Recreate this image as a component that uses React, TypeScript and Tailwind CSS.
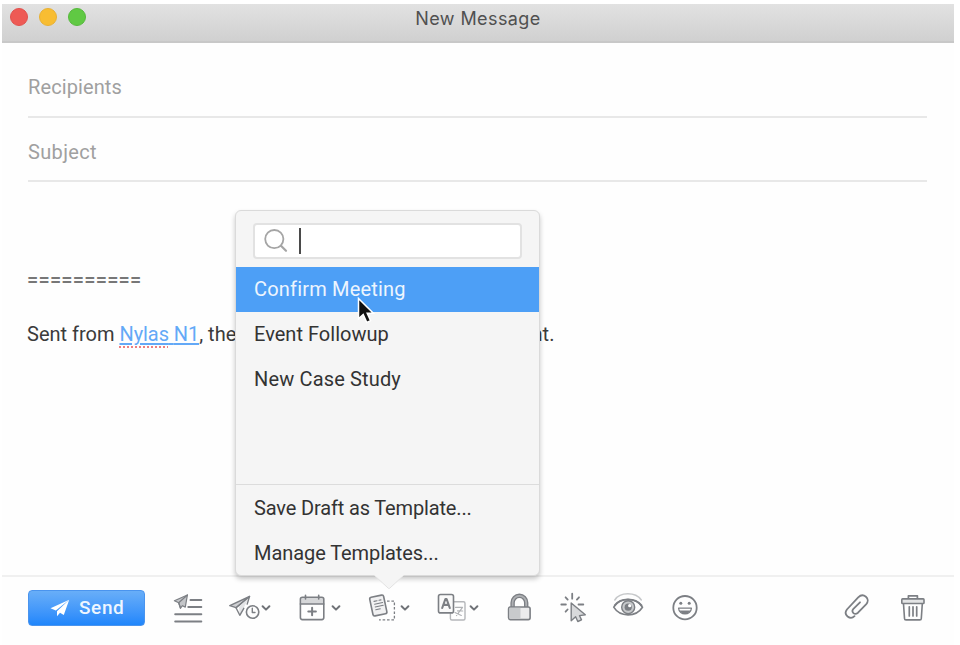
import type { ReactNode } from "react";

const templates = [
  { name: "Confirm Meeting", className: "bg-[#4d9ff6] text-[#edf5fe] tracking-[0.18px]" },
  { name: "Event Followup", className: "tracking-[0.02px]" },
  { name: "New Case Study", className: "tracking-[0.15px]" },
];

const Icon = ({
  children,
  className = "",
}: {
  children: ReactNode;
  className?: string;
}) => (
  <svg
    viewBox="0 0 32 32"
    fill="none"
    stroke="#7c7f84"
    strokeWidth="1.6"
    strokeLinecap="round"
    strokeLinejoin="round"
    className={`size-8 shrink-0 ${className}`}
  >
    {children}
  </svg>
);

const Chevron = ({ className = "" }: { className?: string }) => (
  <svg
    viewBox="0 0 10 8"
    fill="none"
    stroke="#6f7277"
    strokeWidth="2"
    strokeLinecap="round"
    strokeLinejoin="round"
    className={`mt-3 h-2 w-2.5 shrink-0 ${className}`}
  >
    <path d="M1.6 2.3 5 5.6 8.4 2.3" />
  </svg>
);

const TitleBar = () => (
  <header className="relative flex h-[39px] items-start border-b-2 border-[#c8c8c8] bg-linear-to-b from-[#e2e2e2] to-[#d0d0d0] pt-1 pl-2">
    <div className="flex gap-[11px]">
      <span className="size-[18px] rounded-full border border-[#e2504c] bg-[#ee5a55]" />
      <span className="size-[18px] rounded-full border border-[#e9b132] bg-[#f8bd32]" />
      <span className="size-[18px] rounded-full border border-[#55b93b] bg-[#60c943]" />
    </div>
    <h1 className="absolute inset-x-0 top-[3px] text-center font-['Inter'] text-[18px] leading-6 tracking-[0.4px] text-[#505050]">
      New Message
    </h1>
  </header>
);

const Field = ({ label, className }: { label: string; className: string }) => (
  <div
    className={`mr-[27px] ml-[26px] flex border-b-2 border-[#e8e8e8] text-[20px] leading-6 text-[#a0a0a0] ${className}`}
  >
    {label}
  </div>
);

const TemplatePicker = () => (
  <div className="absolute top-[206px] left-[233px] flex h-[366px] w-[305px] flex-col rounded-[6px] border border-[#dadada] bg-[#f5f5f5] text-[20px] text-[#333] shadow-[0_3px_5px_rgba(0,0,0,0.22)]">
    <div className="h-14 pt-3 pr-[17px] pl-[17px]">
      <div className="flex h-9 items-center rounded-[4px] border-2 border-[#e2e2e2] bg-white pl-[9px]">
        <svg
          viewBox="0 0 24 24"
          fill="none"
          stroke="#a5a5a5"
          strokeWidth="1.8"
          strokeLinecap="round"
          className="size-6"
        >
          <circle cx="10.3" cy="10.1" r="9.1" />
          <path d="m17 16.8 5 5" strokeWidth="2.2" />
        </svg>
        <span className="ml-[11px] h-[26px] w-[2px] bg-[#4a4a4a]" />
      </div>
    </div>
    <ul>
      {templates.map(({ name, className }) => (
        <li
          key={name}
          className={`flex h-[44.7px] items-center px-[18px] ${className}`}
        >
          {name}
        </li>
      ))}
    </ul>
    <ul className="mt-auto border-t-[1.5px] border-[#dcdcdc]">
      <li className="flex h-[45px] items-center px-[18px] tracking-[-0.15px]">
        Save Draft as Template...
      </li>
      <li className="flex h-[45px] items-center px-[18px] tracking-[-0.07px]">
        Manage Templates...
      </li>
    </ul>
    <svg
      viewBox="0 0 30 15"
      className="absolute top-[363px] left-[138px] h-[15px] w-[30px]"
    >
      <path d="M0 0h30v1L15.5 14.4h-1L0 1z" fill="#f5f5f5" />
      <path d="M1 2 14.5 14.4h1L29 2" fill="none" stroke="#e2e2e2" />
    </svg>
  </div>
);

const Cursor = () => (
  <svg
    viewBox="0 0 18 28"
    className="absolute top-[293px] left-[355px] h-7 w-[18px]"
  >
    <path
      d="M1.5 1.5v20.3l4.7-4.3 3.5 7.9 3.9-1.7-3.4-7.5h6.1z"
      fill="#111"
      stroke="#fff"
      strokeWidth="1.5"
    />
  </svg>
);

const Toolbar = () => (
  <footer className="flex h-[70px] items-start border-t-2 border-[#f0f0f0] pt-[13px] pl-[26px]">
    <button className="flex h-9 w-[117px] items-center rounded-[4px] border border-[#4a94ee] bg-linear-to-b from-[#68aef8] to-[#1f86fb] pl-[21px] text-[19px] font-medium tracking-[0.6px] text-[#eef6ff]">
      <svg viewBox="0 0 20 18" fill="#fff" className="h-[18px] w-5">
        <path d="M19.2.8.5 9.2l5.3 2.2z" />
        <path d="M19.2.8 7 12.2v5l3-3.5 3.8 2.2z" />
      </svg>
      <span className="ml-[9px]">Send</span>
    </button>

    <div className="flex pt-0.5">
      {/* send and archive */}
      <Icon className="ml-[27px]">
        <path d="M18.5 8h10.8M16.3 15h13M3.2 22.2h26.1M3.2 29.5h26.1" strokeWidth="2" />
        <path d="M15.4 3 2.4 8.8l4.3 1.9 1.8 5.5 2-2.5 2.8 1.4z" strokeWidth="1.2" fill="#c4c6c9" />
        <path d="M15.4 3 6.7 10.7l1.8 5.5" strokeWidth="1.2" />
      </Icon>
      {/* send later */}
      <Icon className="ml-[25px]">
        <path d="M20.5 4.5.8 13.6l6.2 2.1z" fill="#cfd0d3" strokeWidth="1.4" />
        <path d="M20.5 4.5 10 14.7l.8 8.6 3.8-7.4z" fill="#e4e5e7" stroke="none" />
        <path d="M20.5 4.5 7 15.7l3.8 7.6 4-7M20.5 4.5l-2.3 7.6" strokeWidth="1.4" />
        <circle cx="23.6" cy="20" r="6.2" strokeWidth="1.6" fill="#fdfdfd" />
        <path d="M23.3 16.3v4.2h2.7" strokeWidth="1.4" />
      </Icon>
      <Chevron />
      <Icon className="ml-[28px]">
        <path d="M2.2 5.8h22.6V12H2.2z" fill="#d5d6d8" stroke="none" />
        <rect x="1.4" y="5.3" width="23.4" height="22.3" rx="2" />
        <path d="M1.4 12h23.4M6.5 3.3V7M19.7 3.3V7" />
        <path d="M13.1 15.7v7.6M9.3 19.5h7.6" strokeWidth="2" />
      </Icon>
      <Chevron />
      {/* templates */}
      <Icon className="ml-[27px]">
        <path d="M19 9.2h7.4v18.6H11" strokeWidth="1.3" strokeDasharray="2.6 1.8" strokeLinecap="butt" />
        <rect x="3.2" y="4" width="14.2" height="19" rx="1.8" transform="rotate(-12 10.3 13.5)" fill="#f1f1f2" strokeWidth="1.6" />
        <path d="m6 9.4 3-.7M11 8.3l2-.4M6.6 12.2l8-1.7M7.2 15l8-1.7M7.8 17.8l4.5-1" strokeWidth="1.1" />
      </Icon>
      <Chevron />
      {/* translate */}
      <Icon className="ml-[27px]">
        <rect x="13.4" y="9.8" width="14.6" height="18.2" rx="1.5" stroke="#b5b7ba" strokeWidth="1.4" />
        <path d="M18.5 15.3h7l-6 8.2M18 20.5l6.3 3M20.5 18.8l5.2.2" stroke="#b0b2b5" strokeWidth="1.2" />
        <rect x="1.5" y="2.5" width="15" height="18.4" rx="2" fill="#fafafa" />
        <path d="m5.2 16 3.2-9h1.2l3.2 9M6.4 12.9h5.2" strokeWidth="2.1" />
      </Icon>
      <Chevron />
      <Icon className="ml-[28px]">
        <path d="M5.6 15V10.8a6.8 7 0 0 1 13.6 0V15" strokeWidth="4.4" strokeLinecap="butt" />
        <path d="M5.6 15V10.8a6.8 7 0 0 1 13.6 0V15" stroke="#aeb0b3" strokeWidth="1.8" />
        <rect x="1.6" y="15" width="21.5" height="12.6" rx="1.8" fill="#ececed" />
        <path d="M2.5 15.8h11v11h-11z" fill="#c8cacc" stroke="none" />
      </Icon>
      {/* click tracking */}
      <Icon className="ml-[21px]">
        <path d="M12.2 1.7v5M1.3 12.5h4.6M18.5 12.5h4.8M5.6 5.3l2.1 2.3M19 5.3l-2.1 2.3M5.6 19.7l2-2.2" strokeWidth="1.8" />
        <path d="M11.2 11v17.7l4.4-3.9 2.2 4.7 3.7-1.7-2-4.2 5.8-.8z" fill="#d8d9db" strokeWidth="1.4" />
      </Icon>
      {/* read receipts */}
      <Icon className="ml-[20px]">
        <path d="M2.8 8C8-.2 23.5-.2 29.3 8" stroke="#c6c8ca" strokeWidth="1.5" />
        <path d="M1.7 15.2C8 5 24 5 30.5 15.2 24 25.4 8 25.4 1.7 15.2z" strokeWidth="1.6" />
        <path d="M2.7 13.4C9 5.4 22.8 5.4 29.6 13.4" strokeWidth="1.8" />
        <circle cx="16.2" cy="15.2" r="6.5" fill="#c7c9cb" strokeWidth="1.4" />
        <circle cx="16.2" cy="15.2" r="3.6" fill="#7c7f84" stroke="none" />
        <circle cx="17.7" cy="13.7" r="1.6" fill="#fff" stroke="none" />
      </Icon>
      <Icon className="ml-[28px]">
        <circle cx="13" cy="15.7" r="11.7" strokeWidth="1.8" />
        <circle cx="8.8" cy="11.3" r="1.5" fill="#7c7f84" stroke="none" />
        <circle cx="17.2" cy="11.3" r="1.5" fill="#7c7f84" stroke="none" />
        <path d="M6.6 16.2h12.8c-.4 7.4-12.4 7.4-12.8 0z" fill="#fff" strokeWidth="1.3" />
        <path d="M7.5 18.6h11c-1.5 4.4-9.5 4.4-11 0z" fill="#7c7f84" stroke="none" />
      </Icon>
    </div>

    <div className="ml-auto flex pt-0.5 pr-[22px]">
      <Icon>
        <path
          d="M11.5 24.2c-4.3 4.1-11.6-1.2-7.6-6.7L15.2 5.3c5.3-5 12.6 1.4 8.1 6.8l-8.3 8.6c-3.5 3-7.2-.8-4.6-3.8l6.6-6.6"
          strokeWidth="1.8"
        />
      </Icon>
      <Icon className="ml-[25px]">
        <path d="M8.4 7V3.8h9V7" strokeWidth="1.7" />
        <rect x="1.8" y="6.9" width="22.2" height="4.6" rx=".8" fill="#e3e4e5" />
        <path d="m3.5 11.7 1 14.7c0 .9.6 1.5 1.5 1.5h13.8c.9 0 1.5-.6 1.5-1.5l1-14.7" />
        <path d="M9.3 14.8v9.2M13 14.8v9.2M16.7 14.8v9.2" strokeWidth="1.7" />
      </Icon>
    </div>
  </footer>
);

export default function App() {
  return (
    <div className="h-[645px] w-[960px] overflow-hidden bg-white pt-1 pl-0.5 font-['Roboto',sans-serif]">
      <main className="relative flex h-[641px] w-[952px] flex-col bg-[#fefefe]">
        <TitleBar />
        <Field label="Recipients" className="h-[75px] pt-8 tracking-[0.1px]" />
        <Field label="Subject" className="h-16 pt-[22px] tracking-[0.35px]" />
        <div className="flex-1 pt-[86px] pl-[25px] text-[20px] leading-6 text-[#3b3b3b]">
          <p className="font-medium tracking-[0.2px] text-[#777]">==========</p>
          <p className="mt-[30px] whitespace-nowrap">
            Sent from{" "}
            <a className="tracking-[-0.08px] text-[#63a9f7] underline decoration-2 underline-offset-2">
              <span className="underline decoration-[#ee8080] decoration-dotted decoration-[1.5px] underline-offset-[5px]">
                Nylas
              </span>{" "}
              N1
            </a>
            ,{" "}
            <span className="tracking-[0.06px]">
              the extensible, open source mail client.
            </span>
          </p>
        </div>
        <Toolbar />
        <TemplatePicker />
        <Cursor />
      </main>
    </div>
  );
}
